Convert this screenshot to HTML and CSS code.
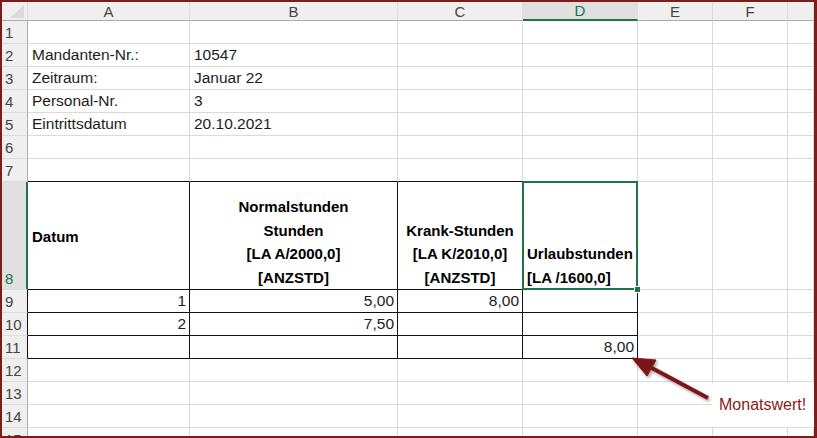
FILE: index.html
```html
<!DOCTYPE html>
<html lang="de">

<head>
    <meta charset="UTF-8">
    <meta name="viewport" content="width=device-width, initial-scale=1.0">
    <title>Urlaubstunden</title>
    <link rel="stylesheet" href="styles.css">
</head>

<body>
    <div class="window">
        <table class="sheet">
            <colgroup>
                <col class="col-rh">
                <col class="col-a">
                <col class="col-b">
                <col class="col-c">
                <col class="col-d">
                <col class="col-e">
                <col class="col-f">
                <col class="col-g">
            </colgroup>
            <thead>
                <tr class="head-row">
                    <th class="corner"></th>
                    <th>A</th>
                    <th>B</th>
                    <th>C</th>
                    <th class="sel">D</th>
                    <th>E</th>
                    <th>F</th>
                    <th></th>
                </tr>
            </thead>
            <tbody>
                <tr>
                    <th class="rh">1</th>
                    <td></td><td></td><td></td><td></td><td></td><td></td><td></td>
                </tr>
                <tr>
                    <th class="rh">2</th>
                    <td>Mandanten-Nr.:</td><td>10547</td><td></td><td></td><td></td><td></td><td></td>
                </tr>
                <tr>
                    <th class="rh">3</th>
                    <td>Zeitraum:</td><td>Januar 22</td><td></td><td></td><td></td><td></td><td></td>
                </tr>
                <tr>
                    <th class="rh">4</th>
                    <td>Personal-Nr.</td><td>3</td><td></td><td></td><td></td><td></td><td></td>
                </tr>
                <tr>
                    <th class="rh">5</th>
                    <td>Eintrittsdatum</td><td>20.10.2021</td><td></td><td></td><td></td><td></td><td></td>
                </tr>
                <tr>
                    <th class="rh">6</th>
                    <td></td><td></td><td></td><td></td><td></td><td></td><td></td>
                </tr>
                <tr>
                    <th class="rh">7</th>
                    <td class="box-top"></td><td class="box-top"></td><td class="box-top"></td><td class="box-top"></td><td></td><td></td><td></td>
                </tr>
                <tr class="tall">
                    <th class="rh rh-sel">8</th>
                    <td class="box label mid">Datum</td>
                    <td class="box label center">Normalstunden<br>Stunden<br>[LA A/2000,0]<br>[ANZSTD]</td>
                    <td class="box label center">Krank-Stunden<br>[LA K/2010,0]<br>[ANZSTD]</td>
                    <td class="box label active">Urlaubstunden<br>[LA /1600,0]</td>
                    <td></td><td></td><td></td>
                </tr>
                <tr>
                    <th class="rh rh-box">9</th>
                    <td class="box num">1</td><td class="box num">5,00</td><td class="box num">8,00</td><td class="box num"></td>
                    <td></td><td></td><td></td>
                </tr>
                <tr>
                    <th class="rh rh-box">10</th>
                    <td class="box num">2</td><td class="box num">7,50</td><td class="box num"></td><td class="box num"></td>
                    <td></td><td></td><td></td>
                </tr>
                <tr>
                    <th class="rh rh-box">11</th>
                    <td class="box num"></td><td class="box num"></td><td class="box num"></td><td class="box num">8,00</td>
                    <td></td><td></td><td></td>
                </tr>
                <tr>
                    <th class="rh">12</th>
                    <td></td><td></td><td></td><td></td><td></td><td></td><td></td>
                </tr>
                <tr>
                    <th class="rh">13</th>
                    <td></td><td></td><td></td><td></td><td></td><td></td><td></td>
                </tr>
                <tr>
                    <th class="rh">14</th>
                    <td></td><td></td><td></td><td></td><td></td><td></td><td></td>
                </tr>
                <tr>
                    <th class="rh">15</th>
                    <td></td><td></td><td></td><td></td><td></td><td></td><td></td>
                </tr>
            </tbody>
        </table>

        <!-- callout arrow pointing at D11 -->
        <svg class="arrow" width="817" height="438" viewBox="0 0 817 438">
            <defs>
                <filter id="shade" x="-20%" y="-20%" width="140%" height="140%">
                    <feDropShadow dx="1.5" dy="2" stdDeviation="1.5" flood-color="#000" flood-opacity="0.35" />
                </filter>
            </defs>
            <g filter="url(#shade)" fill="#7b1416" stroke="#7b1416">
                <line x1="708" y1="398" x2="650" y2="367" stroke-width="4" />
                <polygon points="632,358 656,360 647,376" stroke-width="1" />
            </g>
        </svg>
        <div class="note">Monatswert!</div>
    </div>
</body>

</html>
```

FILE: styles.css
```css
/* General Styles */
body {
    margin: 0;
    background-color: #fff;
    font-family: 'Liberation Sans', Arial, sans-serif;
}

.window {
    position: relative;
    width: 817px;
    height: 438px;
    box-sizing: border-box;
    border: 2px solid #7b1d18;
    border-right-width: 3px;
    overflow: hidden;
    background-color: #fff;
}

/* Sheet grid */
.sheet {
    border-collapse: separate;
    border-spacing: 0;
    table-layout: fixed;
    width: 812px;
}

.col-rh { width: 26px; }
.col-a { width: 162px; }
.col-b { width: 208px; }
.col-c { width: 125px; }
.col-d { width: 115px; }
.col-e { width: 75px; }
.col-f { width: 75px; }
.col-g { width: 26px; }

.sheet th,
.sheet td {
    box-sizing: border-box;
    padding: 0 3px 0 4px;
    border-right: 1px solid #dadada;
    border-bottom: 1px solid #dadada;
    font-size: 15.5px;
    line-height: 20px;
    font-weight: normal;
    color: #1c1c1c;
    white-space: nowrap;
    overflow: hidden;
}

.sheet tbody tr {
    height: 23px;
}

.sheet tbody tr.tall {
    height: 108px;
}

/* Column headers */
.head-row {
    height: 19px;
}

.head-row th {
    background-color: #efefef;
    border-bottom: 1px solid #ababab;
    border-right-color: #dcdcdc;
    color: #444;
    font-size: 15px;
    line-height: 17px;
    text-align: center;
    padding: 0;
}

.head-row th.sel {
    background-color: #e0e0e0;
    color: #217346;
    border-bottom: 2px solid #217346;
}

.corner {
    position: relative;
}

.corner::after {
    content: '';
    position: absolute;
    right: 3px;
    bottom: 2px;
    width: 0;
    height: 0;
    border-left: 14px solid transparent;
    border-bottom: 13px solid #dadada;
}

/* Row headers */
.sheet th.rh {
    background-color: #efefef;
    border-right: 1px solid #ababab;
    border-bottom-color: #dcdcdc;
    color: #444;
    font-size: 15px;
    text-align: left;
    vertical-align: bottom;
    padding: 0 0 0 3px;
    line-height: 21px;
}

.sheet th.rh-sel {
    background-color: #e0e0e0;
    color: #217346;
    border-right: 2px solid #217346;
}

.sheet th.rh-box {
    border-right-color: #111;
}

/* Bordered block A8:D11 */
.sheet td.box-top {
    border-bottom-color: #111;
}

.sheet td.box {
    border-right-color: #111;
    border-bottom-color: #111;
}

.sheet td.num {
    text-align: right;
    padding-right: 3px;
}

.sheet td.label {
    font-weight: bold;
    font-size: 15px;
    line-height: 23.5px;
    color: #000;
    vertical-align: bottom;
    padding: 0 4px;
}

.sheet td.label.mid {
    vertical-align: middle;
    padding-top: 2px;
}

.sheet td.label.center {
    text-align: center;
}

/* Active cell D8 */
.sheet td.active {
    position: relative;
    overflow: visible;
}

.sheet td.active::after {
    content: '';
    position: absolute;
    top: -1px;
    left: -1px;
    right: -1px;
    bottom: -1px;
    border: 2px solid #217346;
}

.sheet td.active::before {
    content: '';
    position: absolute;
    right: -4px;
    bottom: -4px;
    width: 5px;
    height: 5px;
    background-color: #217346;
    border: 1px solid #fff;
    z-index: 1;
}

/* Callout */
.arrow {
    position: absolute;
    top: -2px;
    left: -2px;
    pointer-events: none;
}

.note {
    position: absolute;
    left: 710px;
    top: 381px;
    width: 102px;
    height: 44px;
    padding-left: 7px;
    box-sizing: border-box;
    background-color: #fff;
    color: #8b1a1a;
    font-size: 16px;
    line-height: 44px;
}
```
